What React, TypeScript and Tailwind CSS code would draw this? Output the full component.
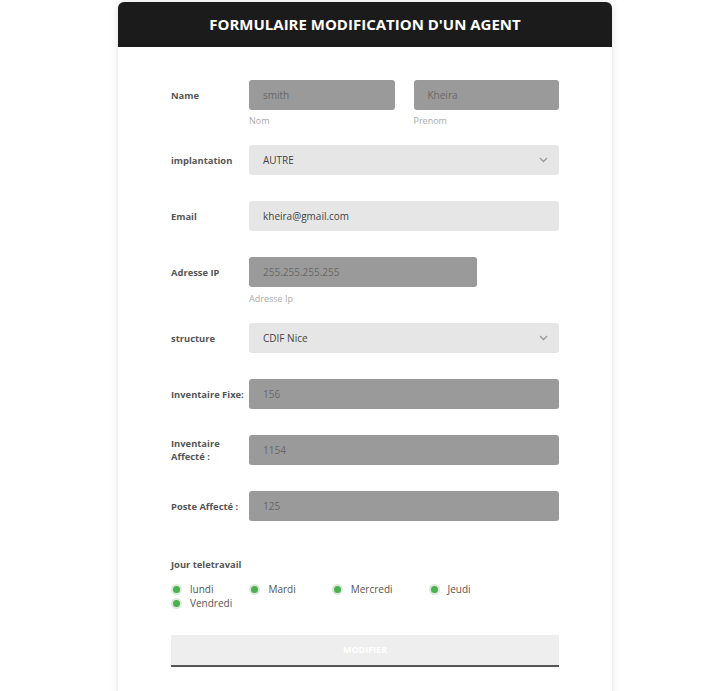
const font = { fontFamily: '"Open Sans", "Noto Sans", sans-serif' };

function Row({ label, children }: { label: React.ReactNode; children: React.ReactNode }) {
  return (
    <div className="flex">
      <div className="w-[78px] shrink-0 h-[30px] flex items-center text-[9.4px] font-bold text-[#555] leading-[13px]">
        {label}
      </div>
      <div className="flex-1">{children}</div>
    </div>
  );
}

function Field({ value, dark, className = "" }: { value: string; dark?: boolean; className?: string }) {
  return (
    <div
      className={
        "h-[30px] rounded-[3px] flex items-center px-[14px] text-[10px] " +
        (dark ? "bg-[#9a9a9a] text-[#686868] " : "bg-[#e6e6e6] text-[#444] ") +
        className
      }
    >
      {value}
    </div>
  );
}

function Select({ value }: { value: string }) {
  return (
    <div className="h-[30px] rounded-[3px] bg-[#e6e6e6] flex items-center justify-between pl-[14px] pr-[11px] text-[10px] text-[#444]">
      <span>{value}</span>
      <svg width="9" height="6" viewBox="0 0 9 6" fill="none">
        <path d="M1 1l3.5 3.5L8 1" stroke="#999" strokeWidth="1.3" />
      </svg>
    </div>
  );
}

const Help = ({ children }: { children: React.ReactNode }) => (
  <div className="text-[9px] text-[#aaa] mt-[5px] leading-[12px]">{children}</div>
);

const days = ["lundi", "Mardi", "Mercredi", "Jeudi", "Vendredi"];

export default function App() {
  return (
    <div className="min-h-screen bg-white pt-[2px]" style={font}>
      <div className="ml-[118px] w-[494px] bg-white rounded-t-[6px] shadow-[0_0_8px_rgba(0,0,0,0.12)] pb-[40px]">
        <div className="h-[45px] bg-[#1b1b1b] rounded-t-[6px] flex items-center justify-center text-white font-bold text-[15px]">
          FORMULAIRE MODIFICATION D'UN AGENT
        </div>
        <div className="px-[53px] pt-[33px] flex flex-col">
          <Row label="Name">
            <div className="flex gap-[19px]">
              <div className="flex-1">
                <Field value="smith" dark />
                <Help>Nom</Help>
              </div>
              <div className="flex-1">
                <Field value="Kheira" dark />
                <Help>Prenom</Help>
              </div>
            </div>
          </Row>
          <div className="h-[18px]" />
          <Row label="implantation">
            <Select value="AUTRE" />
          </Row>
          <div className="h-[26px]" />
          <Row label="Email">
            <Field value="kheira@gmail.com" />
          </Row>
          <div className="h-[26px]" />
          <Row label="Adresse IP">
            <Field value="255.255.255.255" dark className="w-[228px]" />
            <div className="text-[9px] text-[#aaa] mt-[6px] leading-[12px]">Adresse Ip</div>
          </Row>
          <div className="h-[18px]" />
          <Row label="structure">
            <Select value="CDIF Nice" />
          </Row>
          <div className="h-[26px]" />
          <Row label="Inventaire Fixe:">
            <Field value="156" dark />
          </Row>
          <div className="h-[26px]" />
          <Row label={<span>Inventaire<br />Affecté :</span>}>
            <Field value="1154" dark />
          </Row>
          <div className="h-[26px]" />
          <Row label="Poste Affecté :">
            <Field value="125" dark />
          </Row>
          <div className="mt-[37px] text-[9.4px] font-bold text-[#555] leading-[13px]">Jour teletravail</div>
          <div className="mt-[11px] flex flex-wrap gap-x-[36px] w-[388px]">
            {days.map((d) => (
              <label key={d} className="flex items-center h-[14px] gap-[8px] text-[10px] text-[#555]">
                <span className="w-[11px] h-[11px] rounded-full bg-[#dde8dd] flex items-center justify-center">
                  <span className="w-[7px] h-[7px] rounded-full bg-[#4caf50]" />
                </span>
                {d}
              </label>
            ))}
          </div>
          <button className="mt-[25px] h-[32px] bg-[#eeeeee] border-b-2 border-[#555] text-white font-bold text-[9px] flex items-center justify-center">
            MODIFIER
          </button>
        </div>
      </div>
    </div>
  );
}
